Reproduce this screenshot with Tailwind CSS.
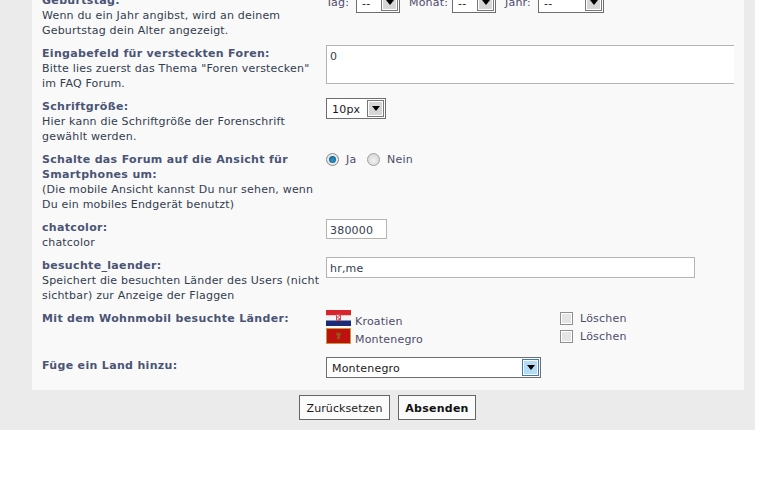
<!DOCTYPE html>
<html lang="de">
  <head>
    <meta charset="UTF-8" />
    <title>Profil</title>
    <script src="https://cdn.jsdelivr.net/npm/@tailwindcss/browser@4"></script>
  </head>
  <body class="bg-white h-[502px] overflow-hidden font-['DejaVu_Sans',sans-serif] text-[11px] leading-[15px] tracking-[0.2px] text-[#323d4f] [&_b]:tracking-[0.33px]">
    <div class="w-[755px] h-[430px] bg-[#ebebeb] overflow-hidden">
      <div class="ml-[32px] w-[712px] h-[390px] bg-[#f9f9f9] pl-[10px] pt-[46px] overflow-hidden relative">
        <!-- row cut off by the top of the window -->
        <div class="absolute left-[10px] top-[-7px] grid grid-cols-[284px_1fr]">
          <div>
            <b class="text-[#4a5475]">Geburtstag:</b><br />
            Wenn du ein Jahr angibst, wird an deinem<br />
            Geburtstag dein Alter angezeigt.
          </div>
          <div class="flex items-start text-[#4c4c6a]">
            <span class="mr-[4px] w-[26px] pt-[2px]">Tag:</span>
            <div class="w-[44px] h-[21px] -mt-[1px] border border-[#6e6e6e] bg-white flex items-center justify-between pl-[5px] pr-px">
              <span class="text-[#1a1a1a] pt-px">--</span>
              <span class="w-[17px] h-[17px] border border-[#777] shadow-[inset_0_0_0_1px_#fff] bg-[#d6d6d6] flex items-center justify-center"><span class="border-x-[4px] border-t-[5px] border-x-transparent border-t-black"></span></span>
            </div>
            <span class="ml-[9px] mr-[4px] w-[39px] pt-[2px]">Monat:</span>
            <div class="w-[44px] h-[21px] -mt-[1px] border border-[#6e6e6e] bg-white flex items-center justify-between pl-[5px] pr-px">
              <span class="text-[#1a1a1a] pt-px">--</span>
              <span class="w-[17px] h-[17px] border border-[#777] shadow-[inset_0_0_0_1px_#fff] bg-[#d6d6d6] flex items-center justify-center"><span class="border-x-[4px] border-t-[5px] border-x-transparent border-t-black"></span></span>
            </div>
            <span class="ml-[9px] mr-[4px] w-[29px] pt-[2px]">Jahr:</span>
            <div class="w-[66px] h-[21px] -mt-[1px] border border-[#6e6e6e] bg-white flex items-center justify-between pl-[5px] pr-px">
              <span class="text-[#1a1a1a] pt-px">--</span>
              <span class="w-[17px] h-[17px] border border-[#777] shadow-[inset_0_0_0_1px_#fff] bg-[#d6d6d6] flex items-center justify-center"><span class="border-x-[4px] border-t-[5px] border-x-transparent border-t-black"></span></span>
            </div>
          </div>
        </div>

        <div class="grid grid-cols-[284px_1fr] h-[53px]">
          <div>
            <b class="text-[#4a5475]">Eingabefeld für versteckten Foren:</b><br />
            Bitte lies zuerst das Thema "Foren verstecken"<br />
            im FAQ Forum.
          </div>
          <div class="w-[408px] h-[39px] -mt-px border-y border-l border-[#b4b4b4] bg-white pl-[3px] pt-[3px]">0</div>
        </div>

        <div class="grid grid-cols-[284px_1fr] h-[53px]">
          <div>
            <b class="text-[#4a5475]">Schriftgröße:</b><br />
            Hier kann die Schriftgröße der Forenschrift<br />
            gewählt werden.
          </div>
          <div class="w-[60px] h-[21px] -mt-px border border-[#6e6e6e] bg-white flex items-center justify-between pl-[5px] pr-px text-[#1a1a1a]">
            <span class="pt-px">10px</span>
            <span class="w-[17px] h-[17px] border border-[#777] shadow-[inset_0_0_0_1px_#fff] bg-[#d6d6d6] flex items-center justify-center"><span class="border-x-[4px] border-t-[5px] border-x-transparent border-t-black"></span></span>
          </div>
        </div>

        <div class="grid grid-cols-[284px_1fr] h-[68px]">
          <div>
            <b class="text-[#4a5475]">Schalte das Forum auf die Ansicht für<br />Smartphones um:</b><br />
            (Die mobile Ansicht kannst Du nur sehen, wenn<br />
            Du ein mobiles Endgerät benutzt)
          </div>
          <div class="flex items-start h-[15px] text-[#4c4c6a]">
            <span class="w-[13px] h-[13px] mt-px rounded-full border border-[#8a8a8a] bg-[#e8e8e8] flex items-center justify-center"><span class="w-[7px] h-[7px] rounded-full bg-[radial-gradient(circle_at_50%_60%,#2f9ad0,#0b4f7a)]"></span></span>
            <span class="ml-[7px] w-[14px]">Ja</span>
            <span class="w-[13px] h-[13px] mt-px ml-[7px] rounded-full border border-[#a0a0a0] bg-[radial-gradient(circle_at_50%_60%,#f2f2f2,#d0d0d0)]"></span>
            <span class="ml-[7px]">Nein</span>
          </div>
        </div>

        <div class="grid grid-cols-[284px_1fr] h-[38px]">
          <div>
            <b class="text-[#4a5475]">chatcolor:</b><br />
            chatcolor
          </div>
          <div class="w-[61px] h-[20px] -mt-px border border-[#b4b4b4] bg-white pl-[3px] pt-[3px]">380000</div>
        </div>

        <div class="grid grid-cols-[284px_1fr] h-[53px]">
          <div>
            <b class="text-[#4a5475]">besuchte_laender:</b><br />
            Speichert die besuchten Länder des Users (nicht<br />
            sichtbar) zur Anzeige der Flaggen
          </div>
          <div class="w-[369px] h-[21px] -mt-px border border-[#b4b4b4] bg-white pl-[3px] pt-[3px]">hr,me</div>
        </div>

        <div class="grid grid-cols-[284px_1fr] h-[47px]">
          <div><b class="text-[#4a5475]">Mit dem Wohnmobil besuchte Länder:</b></div>
          <div class="grid grid-cols-[234px_1fr] grid-rows-[18px_18px] text-[#4c4c6a]">
            <div class="flex items-start">
              <svg width="25" height="16" viewBox="0 0 25 16" class="shrink-0 -mt-[1px]">
                <rect width="25" height="5.5" fill="#d8242c" />
                <rect y="5.5" width="25" height="5" fill="#f4f4f4" />
                <rect y="10.5" width="25" height="5.5" fill="#1c2a78" />
                <rect x="10" y="4" width="5" height="7" rx="1" fill="#c9505a" />
                <rect x="11" y="5" width="1.5" height="1.5" fill="#fff" />
                <rect x="12.5" y="6.5" width="1.5" height="1.5" fill="#fff" />
                <rect x="11" y="8" width="1.5" height="1.5" fill="#fff" />
              </svg>
              <span class="ml-[4px] mt-[3px]">Kroatien</span>
            </div>
            <div class="flex items-center gap-[7px] h-[15px]">
              <span class="w-[13px] h-[13px] border border-[#8e8e8e] bg-[#e4e4e4] shadow-[inset_0_0_0_1px_#fff]"></span>
              <span>Löschen</span>
            </div>
            <div class="flex items-start">
              <svg width="25" height="16" viewBox="0 0 25 16" class="shrink-0 -mt-[1px]">
                <rect width="25" height="16" fill="#c8983c" />
                <rect x="1" y="1" width="23" height="14" fill="#bf1010" />
                <path d="M12.5 4l.8 1.2 1.7-.8-.3 2.6-1 1.2.5 2.3-1.7 1-1.7-1 .5-2.3-1-1.2-.3-2.6 1.7.8z" fill="#8f5a18" />
              </svg>
              <span class="ml-[4px] mt-[3px]">Montenegro</span>
            </div>
            <div class="flex items-center gap-[7px] h-[15px]">
              <span class="w-[13px] h-[13px] border border-[#8e8e8e] bg-[#e4e4e4] shadow-[inset_0_0_0_1px_#fff]"></span>
              <span>Löschen</span>
            </div>
          </div>
        </div>

        <div class="grid grid-cols-[284px_1fr]">
          <div><b class="text-[#4a5475]">Füge ein Land hinzu:</b></div>
          <div class="w-[215px] h-[21px] -mt-px border border-[#6e6e6e] bg-white flex items-center justify-between pl-[5px] pr-px text-[#1a1a1a]">
            <span class="pt-px">Montenegro</span>
            <span class="w-[17px] h-[17px] border border-[#3d7bad] shadow-[inset_0_0_0_1px_#fff] bg-[#b5dcf5] flex items-center justify-center"><span class="border-x-[4px] border-t-[5px] border-x-transparent border-t-black"></span></span>
          </div>
        </div>
      </div>

      <div class="flex justify-center gap-[8px] pt-[5px] pl-[20px] w-[755px]">
        <button class="w-[91px] h-[25px] pt-px border border-[#666] bg-[#fbfbfb] text-[#1a1a1a] tracking-[0.1px]">Zurücksetzen</button>
        <button class="w-[78px] h-[25px] pt-px border border-[#666] bg-[#fbfbfb] text-[#111] font-bold tracking-[0.25px]">Absenden</button>
      </div>
    </div>
  </body>
</html>
